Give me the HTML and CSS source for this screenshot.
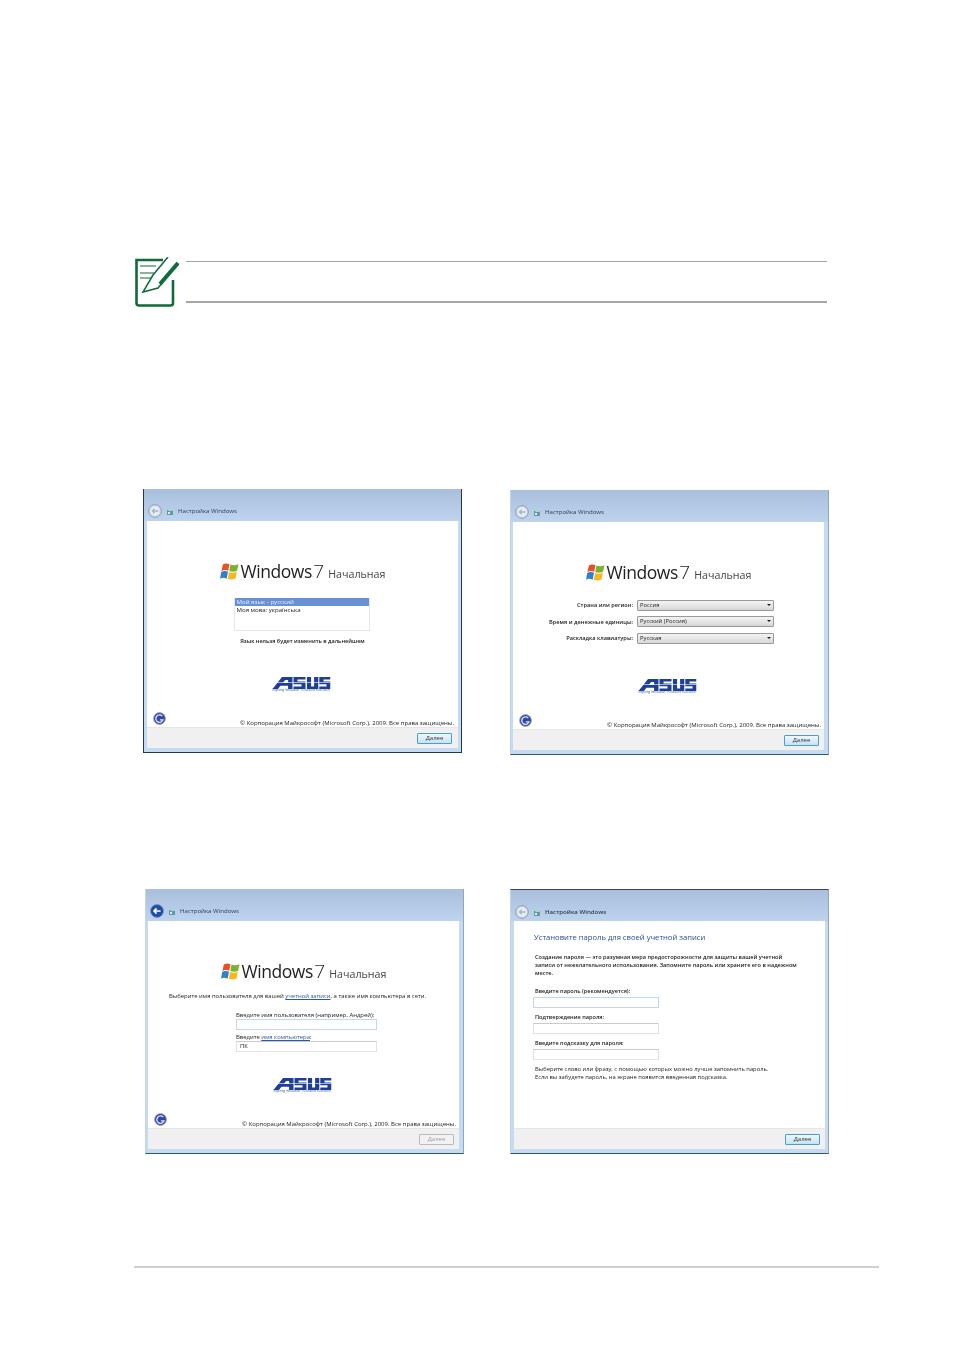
FILE: index.html
```html
<!DOCTYPE html>
<html lang="ru">
<head>
    <meta charset="UTF-8">
    <meta name="viewport" content="width=device-width, initial-scale=1.0">
    <title>Настройка Windows</title>
    <link rel="stylesheet" href="styles.css">
</head>
<body>
    <svg class="defs" width="0" height="0" aria-hidden="true">
        <symbol id="flag" viewBox="0 0 20 18">
            <path fill="#e8502a" d="M3 1.500C5 .2 7.500 0 10 1.200L8.600 8.200C6 7 3.600 7.200 1.400 8.400Z"/>
            <path fill="#7cb22e" d="M11 1.500C13.500 2.600 16 2.600 19.500 1.200L18 8.200C15 9.600 12.400 9.400 9.800 8.400Z"/>
            <path fill="#2f7fd0" d="M1.200 9.400C3.400 8.200 6 8 8.400 9.300L7 16.600C4.600 15.400 2 15.400 0 16.600Z"/>
            <path fill="#f5b81e" d="M9.600 9.500C12.200 10.500 15 10.600 17.800 9.300L16.400 16.400C13.500 17.800 10.600 17.700 8.200 16.700Z"/>
        </symbol>
        <symbol id="asus" viewBox="0 0 58 12">
            <path fill="#1d3f94" d="M0 12 9.500 0H20V12H15.600V8.800H8L5.400 12ZM10.200 6H15.600V3H12.600Z"/>
            <path fill="#1d3f94" d="M21 0H33V2.600H25V4.600H33V12H21V9.400H29V7.200H21Z"/>
            <path fill="#1d3f94" d="M34.400 0H38.600V9.400H41.600V0H45.800V12H34.400Z"/>
            <path fill="#1d3f94" d="M46.800 0H58V2.600H51V4.600H58V12H46.800V9.400H54V7.200H46.800Z"/>
            <rect x="4" y="5.300" width="54" height=".6" fill="#fff"/>
        </symbol>
        <symbol id="back" viewBox="0 0 14 14">
            <circle cx="7" cy="7" r="6.300" fill="#d5e0ec" stroke="#8d9cae"/>
            <circle cx="7" cy="7" r="4.400" fill="#e8eef5"/>
            <path d="M10.400 7H4.400M6.600 4.800 4.400 7l2.200 2.200" fill="none" stroke="#a6b4c4" stroke-width="1.300"/>
        </symbol>
        <symbol id="back-on" viewBox="0 0 14 14">
            <circle cx="7" cy="7" r="6.500" fill="#1c4fa8" stroke="#7d93b5" stroke-width=".8"/>
            <path d="M10.600 7H4.200M6.600 4.400 4 7l2.600 2.600" fill="none" stroke="#fff" stroke-width="1.600"/>
        </symbol>
        <symbol id="setup" viewBox="0 0 8 8">
            <rect x="1" y="3" width="6" height="5" fill="#5f9aa6"/>
            <rect x="2.500" y="1" width="4" height="3" fill="#a9d8c9"/>
            <rect x="2" y="5" width="2" height="2" fill="#d9eef0"/>
        </symbol>
        <symbol id="ease" viewBox="0 0 14 14">
            <circle cx="7" cy="7" r="6.400" fill="#3447a8" stroke="#a3abbd"/>
            <path d="M10 4.400A4 4 0 1 0 10.800 8.400H7.400" fill="none" stroke="#dfe4f5" stroke-width="1.400"/>
        </symbol>
    </svg>

    <div class="note">
        <svg class="note-icon" viewBox="0 0 44 50">
            <path d="M28 3H1.500V46A2.500 2.500 0 0 0 4 48.500H35.500A2.500 2.500 0 0 0 38 46V23" fill="none" stroke="#0f6b38" stroke-width="2.600"/>
            <path d="M5 9H21M5 16H19M5 21H16" fill="none" stroke="#0f6b38" stroke-width="1.200"/>
            <path d="M33 0 18 18 8 35 23 31 28 25" fill="none" stroke="#0f6b38" stroke-width="1.500"/>
            <path d="M43 6 25 27" fill="none" stroke="#0f6b38" stroke-width="4"/>
        </svg>
        <div class="note-rules"></div>
    </div>

    <div class="row row-first">
        <section class="shot shot-dark shot-lang">
            <header class="bar">
                <svg class="back"><use href="#back"/></svg>
                <svg class="setup"><use href="#setup"/></svg>
                <span>Настройка Windows</span>
            </header>
            <div class="pane">
                <div class="brand">
                    <svg class="flag"><use href="#flag"/></svg>
                    <span class="win">Windows</span><sup class="tm">™</sup><span class="seven">7</span>
                    <span class="edition">Начальная</span>
                </div>
                <ul class="lang-list">
                    <li class="selected">Мой язык - русский</li>
                    <li>Моя мова: українська</li>
                </ul>
                <p class="lang-hint">Язык нельзя будет изменить в дальнейшем</p>
                <div class="asus asus-lang">
                    <svg class="asus-mark"><use href="#asus"/></svg>
                    <small>Inspiring Innovation · Persistent Perfection</small>
                </div>
                <div class="legal">
                    <svg class="ease"><use href="#ease"/></svg>
                    <span>© Корпорация Майкрософт (Microsoft Corp.), 2009. Все права защищены.</span>
                </div>
            </div>
            <footer class="actions"><button>Далее</button></footer>
        </section>

        <section class="shot shot-pale shot-region">
            <header class="bar">
                <svg class="back"><use href="#back"/></svg>
                <svg class="setup"><use href="#setup"/></svg>
                <span>Настройка Windows</span>
            </header>
            <div class="pane">
                <div class="brand">
                    <svg class="flag"><use href="#flag"/></svg>
                    <span class="win">Windows</span><sup class="tm">™</sup><span class="seven">7</span>
                    <span class="edition">Начальная</span>
                </div>
                <div class="fields">
                    <label>Страна или регион:</label>
                    <div class="select">Россия</div>
                    <label>Время и денежные единицы:</label>
                    <div class="select">Русский (Россия)</div>
                    <label>Раскладка клавиатуры:</label>
                    <div class="select">Русская</div>
                </div>
                <div class="asus asus-region">
                    <svg class="asus-mark"><use href="#asus"/></svg>
                    <small>Inspiring Innovation · Persistent Perfection</small>
                </div>
                <div class="legal">
                    <svg class="ease"><use href="#ease"/></svg>
                    <span>© Корпорация Майкрософт (Microsoft Corp.), 2009. Все права защищены.</span>
                </div>
            </div>
            <footer class="actions"><button>Далее</button></footer>
        </section>
    </div>

    <div class="row row-second">
        <section class="shot shot-pale shot-user">
            <header class="bar">
                <svg class="back"><use href="#back-on"/></svg>
                <svg class="setup"><use href="#setup"/></svg>
                <span>Настройка Windows</span>
            </header>
            <div class="pane">
                <div class="brand">
                    <svg class="flag"><use href="#flag"/></svg>
                    <span class="win">Windows</span><sup class="tm">™</sup><span class="seven">7</span>
                    <span class="edition">Начальная</span>
                </div>
                <p class="user-intro">Выберите имя пользователя для вашей <a>учетной записи</a>, а также имя компьютера в сети.</p>
                <div class="user-form">
                    <label>Введите имя пользователя (например, Андрей):</label>
                    <div class="input input-focus"></div>
                    <label>Введите <a>имя компьютера</a>:</label>
                    <div class="input">ПК</div>
                </div>
                <div class="asus asus-user">
                    <svg class="asus-mark"><use href="#asus"/></svg>
                    <small>Inspiring Innovation · Persistent Perfection</small>
                </div>
                <div class="legal">
                    <svg class="ease"><use href="#ease"/></svg>
                    <span>© Корпорация Майкрософт (Microsoft Corp.), 2009. Все права защищены.</span>
                </div>
            </div>
            <footer class="actions"><button disabled>Далее</button></footer>
        </section>

        <section class="shot shot-pale shot-topline shot-pass">
            <header class="bar">
                <svg class="back"><use href="#back"/></svg>
                <svg class="setup"><use href="#setup"/></svg>
                <span class="bar-strong">Настройка Windows</span>
            </header>
            <div class="pane pane-pass">
                <h2>Установите пароль для своей учетной записи</h2>
                <p class="pass-intro">Создание пароля — это разумная мера предосторожности для защиты вашей учетной записи от нежелательного использования. Запомните пароль или храните его в надежном месте.</p>
                <label>Введите пароль (рекомендуется):</label>
                <div class="input input-focus"></div>
                <label>Подтверждение пароля:</label>
                <div class="input"></div>
                <label>Введите подсказку для пароля:</label>
                <div class="input"></div>
                <p class="pass-hint">Выберите слово или фразу, с помощью которых можно лучше запомнить пароль.<br>Если вы забудете пароль, на экране появится введенная подсказка.</p>
            </div>
            <footer class="actions"><button>Далее</button></footer>
        </section>
    </div>

    <div class="page-rule"></div>
</body>
</html>
```

FILE: styles.css
```css
body {
    margin: 0;
    background-color: white;
    font-family: "Open Sans", "Liberation Sans", sans-serif;
    color: #222;
}
.defs {
    display: block;
    height: 0;
}
.note {
    display: flex;
    width: 692px;
    margin: 257px 0 0 135px;
}
.note-icon {
    width: 44px;
    height: 50px;
    flex: none;
}
.note-rules {
    flex: 1;
    height: 39px;
    margin: 4px 0 0 7px;
    border-top: 1px solid #a6a6a6;
    border-bottom: 2px solid #a6a6a6;
}
.row {
    display: flex;
    align-items: flex-start;
}
.row-first {
    gap: 48px;
    margin: 182px 0 0 143px;
}
.row-second {
    gap: 46px;
    margin: 134px 0 0 145px;
}
.page-rule {
    width: 745px;
    height: 2px;
    margin: 112px 0 0 134px;
    background-color: #d0d0d0;
}

/* window */
.shot {
    display: flex;
    flex-direction: column;
    width: 319px;
    height: 265px;
    box-sizing: border-box;
    padding: 0 3px 4px;
    background: linear-gradient(#a9bfdc, #bdd3ee 32px, #c6daf1 32px);
    filter: blur(0.3px);
    font-size: 5.8px;
    line-height: 8px;
    border-bottom: 1px solid #2b5d6d;
}
.shot-dark {
    height: 264px;
    border-left: 1px solid #24384c;
    border-right: 1px solid #24384c;
    border-bottom-color: #24384c;
}
.shot-pale {
    padding: 0 4px 4px 2px;
    border-left: 1px solid #c3d4e8;
    border-right: 1px solid #8fa6bf;
}
.shot-region {
    margin-top: 1px;
}
.shot-topline {
    padding: 0 3px 4px;
    border-top: 1px solid #38475a;
}
.bar {
    display: flex;
    align-items: center;
    flex: none;
    height: 32px;
    padding: 12px 0 0 1px;
    box-sizing: border-box;
    font-size: 6.100px;
    color: #2f3d50;
}
.shot-pale .bar {
    padding-left: 2px;
}
.shot-topline .bar {
    height: 31px;
    padding-left: 1px;
}
.bar-strong {
    font-weight: 600;
}
.back {
    width: 14px;
    height: 14px;
}
.setup {
    width: 8px;
    height: 8px;
    margin: 0 4px;
}
.pane {
    position: relative;
    flex: 1;
    min-height: 0;
    display: flex;
    flex-direction: column;
    background-color: white;
}
.brand {
    display: flex;
    align-items: baseline;
    justify-content: center;
    height: 24px;
    margin-top: 38px;
    color: #222;
}
.flag {
    width: 19px;
    height: 17px;
    margin-right: 2px;
    align-self: center;
}
.win {
    font-size: 17.500px;
    font-weight: 400;
    letter-spacing: -0.45px;
    line-height: 24px;
}
.tm {
    margin-right: -2px;
    font-size: 2px;
    line-height: 0;
    color: #888;
}
.seven {
    font-size: 19px;
    font-weight: 300;
    line-height: 24px;
    margin: 0 4px 0 2px;
}
.edition {
    font-size: 10.700px;
    color: #444;
}

/* first window */
.lang-list {
    width: 136px;
    height: 33px;
    box-sizing: border-box;
    margin: 15px 0 0 87px;
    padding: 0;
    border: 1px solid #e3e8ee;
    border-top: 0;
    font-size: 6.100px;
    list-style: none;
}
.lang-list li {
    height: 8px;
    padding-left: 1.500px;
}
.lang-list .selected {
    background-color: #6a90d4;
    color: #e4ecfa;
}
.lang-hint {
    margin: 6px 0 0;
    text-align: center;
    font-weight: 600;
    font-size: 5.550px;
}
.asus {
    display: flex;
    flex-direction: column;
    align-items: center;
    width: 60px;
    margin: 0 auto;
    transform: translateX(-1.500px);
}
.asus-mark {
    width: 58px;
    height: 12px;
    flex: none;
}
.asus small {
    font-size: 2.900px;
    line-height: 3px;
    color: #274a9c;
    white-space: nowrap;
}
.asus-lang {
    margin-top: 32px;
}
.legal {
    display: flex;
    align-items: flex-end;
    justify-content: space-between;
    margin-top: auto;
    padding: 0 4px 0 6px;
    font-size: 6px;
    line-height: 7px;
}
.shot-pale .legal {
    padding-right: 3px;
}
.ease {
    width: 13px;
    height: 13px;
    margin-bottom: 2.500px;
}
.actions {
    display: flex;
    justify-content: flex-end;
    align-items: center;
    flex: none;
    height: 21px;
    padding-right: 6px;
    border-top: 1px solid #e4e6e8;
    box-sizing: border-box;
    background-color: #f0f0f0;
}
.shot-pale .actions {
    padding-right: 5px;
}
.actions button {
    width: 35px;
    height: 11px;
    padding: 0;
    border: 1px solid #4f9cc4;
    border-radius: 1px;
    background: linear-gradient(#eef7fd, #c5e3f5);
    font-family: inherit;
    font-size: 6px;
    line-height: 8px;
    color: #333;
}
.actions button:disabled {
    border-color: #b8bcc0;
    background: #f2f2f2;
    color: #a0a0a0;
}

/* second window */
.fields {
    display: grid;
    grid-template-columns: 120px 137px;
    grid-auto-rows: 12px;
    row-gap: 4.500px;
    align-items: center;
    column-gap: 4px;
    margin-top: 15px;
    font-weight: 600;
    font-size: 5.650px;
}
.fields label {
    text-align: right;
    white-space: nowrap;
}
.select {
    position: relative;
    height: 11px;
    box-sizing: border-box;
    padding-left: 2px;
    border: 1px solid #9a9a9a;
    border-radius: 1px;
    background: linear-gradient(#f4f4f4, #d8d8d8);
    font-weight: 400;
    font-size: 5.800px;
    line-height: 9px;
}
.select::after {
    content: "";
    position: absolute;
    right: 2px;
    top: 3px;
    border: 2px solid transparent;
    border-top: 2.500px solid #222;
}
.asus-region {
    margin-top: 35px;
}

/* third window */
.user-intro {
    margin: 9px 0 0;
    padding-right: 12px;
    text-align: center;
    white-space: nowrap;
    font-size: 5.900px;
}
a {
    color: #2a55b0;
    text-decoration: underline;
}
.user-form {
    display: flex;
    flex-direction: column;
    width: 141px;
    margin: 12px 0 0 88px;
    font-size: 5.900px;
}
.user-form label {
    line-height: 7px;
    white-space: nowrap;
}
.user-form .input {
    height: 11px;
    margin-bottom: 4px;
}
.input {
    box-sizing: border-box;
    padding-left: 3px;
    border: 1px solid #e0e3e6;
    border-top-color: #c8ccd0;
    line-height: 9px;
}
.input-focus {
    border-color: #c2d8ea;
}
.asus-user {
    margin-top: 22px;
}

/* fourth window */
.pane-pass {
    padding-left: 19px;
    font-size: 5.600px;
}
.pane-pass h2 {
    margin: 11px 0 0 1px;
    font-size: 7.650px;
    font-weight: 400;
    line-height: 10px;
    color: #2b4a9c;
}
.pass-intro {
    width: 268px;
    margin: 11px 0 0 2px;
    font-weight: 600;
}
.pane-pass label {
    margin: 5px 0 0 2px;
    font-weight: 600;
    line-height: 8px;
}
.pane-pass .pass-intro + label {
    margin-top: 10px;
}
.pane-pass .input {
    width: 126px;
    height: 11px;
    flex: none;
    margin-top: 2px;
}
.pass-hint {
    margin: 5px 0 0 2px;
    font-size: 5.800px;
}
```
